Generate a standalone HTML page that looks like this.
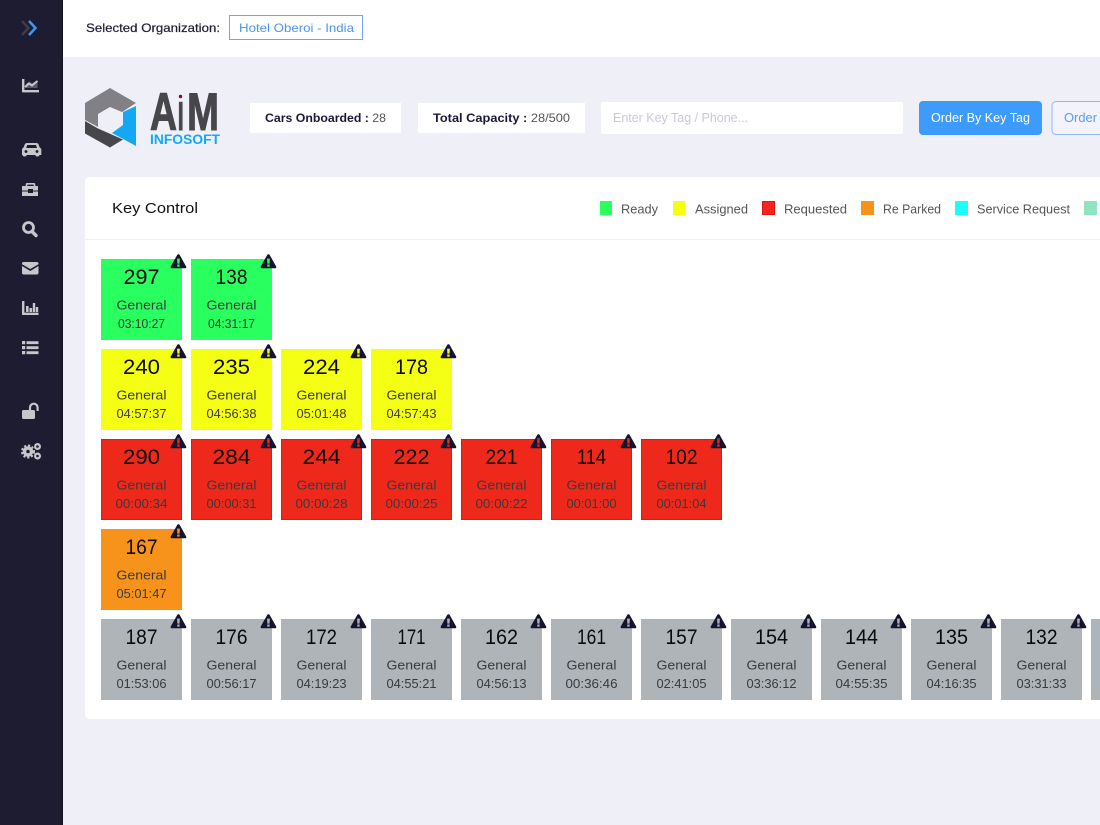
<!DOCTYPE html>
<html><head><meta charset="utf-8"><title>Key Control</title>
<style>
html,body{margin:0;padding:0;width:1100px;height:825px;overflow:hidden;background:#efeff8}
svg{display:block;font-family:"Liberation Sans",sans-serif}
.n{font-size:21px;fill:#0a0a0a;text-anchor:middle}
.g,.t{font-size:13px;fill:#3a3a3a;text-anchor:middle}
.l{font-size:12.5px;fill:#555}
.ic{fill:#c6c6cc}
</style></head><body>
<svg width="1100" height="825" viewBox="0 0 1100 825" xmlns="http://www.w3.org/2000/svg">
<defs>
<symbol id="w" viewBox="0 0 18 16" width="16.5" height="14.7"><path fill="#15132e" fill-rule="evenodd" d="M9 .3c.6 0 1.100.3 1.400.8l7 12.500c.5.9 0 1.900-1.100 1.900H1.700C.6 15.500.1 14.500.6 13.600l7-12.500C7.900.6 8.400.3 9 .3zM7.500 5.200l.3 5.300h2.400l.3-5.300zM7.700 11.400v2.300h2.600v-2.300z"/></symbol>
</defs>
<rect width="1100" height="825" fill="#efeff8"/>
<rect x="63" width="1037" height="57" fill="#fff"/>
<rect width="62" height="825" fill="#1e1c31"/><rect x="62" width="1" height="825" fill="#12111f"/>

<!-- sidebar icons -->
<path d="M22 21l6.500 7-6.500 7" fill="none" stroke="#3e3e4a" stroke-width="2.400"/>
<path d="M29 21l6.500 7-6.500 7" fill="none" stroke="#3f95f2" stroke-width="2.600"/>
<path class="ic" d="M22 79h2.400v11h14.600v2.400H22z"/><path class="ic" d="M25.500 84.500l3.500-3 3 1.800 5.500-3v7.700h-12z" opacity=".35"/><path d="M25 87l4-3.500 3 2 5.500-4.500" fill="none" stroke="#c6c6cc" stroke-width="2"/>
<path class="ic" fill-rule="evenodd" d="M27 143h9.400c1 0 1.800.6 2.200 1.500l1.100 3c1 .4 1.600 1.200 1.600 2.200V155h-2v.5c0 1.300-3.800 1.300-3.800 0V155H26.500v.5c0 1.300-3.800 1.300-3.800 0V155H22v-5.300c0-1 .6-1.800 1.600-2.200l1.100-3c.4-.9 1.200-1.500 2.300-1.500zm.2 2l-1 3h10.800l-1-3zM26 150a1.500 1.500 0 1 0 .01 0zm11 0a1.500 1.500 0 1 0 .01 0z"/>
<path class="ic" fill-rule="evenodd" d="M27 183h7c.8 0 1.300.6 1.300 1.300V186H38v4.500h-5V189h-5v1.500h-6V186h3.700v-1.700c0-.7.5-1.300 1.300-1.300zm.3 1.600V186h6.400v-1.400zM22 191.500h6v1.500h5v-1.500h5v4.500H22z"/>
<circle cx="28.500" cy="227.500" r="5" fill="none" stroke="#c6c6cc" stroke-width="2.800"/><path d="M32 231.500l4 4" stroke="#c6c6cc" stroke-width="3.400" stroke-linecap="round"/>
<path class="ic" d="M23.500 262h13.500c.8 0 1.500.7 1.500 1.500v.7l-8.200 4.800-8.300-4.800v-.7c0-.8.700-1.500 1.500-1.500zM22 266l8.300 5 8.200-5v7c0 .8-.7 1.500-1.500 1.500H23.500c-.8 0-1.500-.7-1.500-1.500z"/>
<path class="ic" d="M22 301h2.400v11.600H38.500v2.400H22zM26 306h2.600v6H26zM29.500 308h2.600v4h-2.600zM32.800 303h2.400v9h-2.400zM35.800 307h2.400v5h-2.400z"/>
<path class="ic" d="M22 341h3.200v3.200H22zM26.500 341.300H38.500v2.800H26.500zM22 346h3.200v3.200H22zM26.500 346.300H38.500v2.800H26.500zM22 351h3.200v3.200H22zM26.500 351.300H38.500v2.800H26.500z"/>
<rect class="ic" x="22" y="410" width="13" height="9" rx="1.500"/><path d="M30 410v-2.500a3.600 3.600 0 0 1 7.600 0V411" fill="none" stroke="#c6c6cc" stroke-width="2.200"/>
<circle cx="28" cy="451.500" r="3.500" fill="none" stroke="#c6c6cc" stroke-width="3.500"/><circle cx="28" cy="451.500" r="6" fill="none" stroke="#c6c6cc" stroke-width="2" stroke-dasharray="2.200 1.800"/>
<circle cx="37.500" cy="446.500" r="2.400" fill="none" stroke="#c6c6cc" stroke-width="2.200"/><circle cx="37.500" cy="456" r="2.400" fill="none" stroke="#c6c6cc" stroke-width="2.200"/>

<!-- top bar -->
<text x="86" y="32" font-size="12" fill="#1e1c31" textLength="134" lengthAdjust="spacingAndGlyphs" stroke="#1e1c31" stroke-width=".2">Selected Organization:</text>
<rect x="229.500" y="15.500" width="133" height="24" fill="#fff" stroke="#6da6f3"/>
<text x="239" y="32" font-size="12" fill="#4a94f0" textLength="115" lengthAdjust="spacingAndGlyphs">Hotel Oberoi - India</text>

<!-- logo -->
<path fill="#808085" d="M85 103l25-15 26 15-14 9-12-5-12 7v13l-13-7z"/>
<path fill="#47474b" d="M85 121l13 7.500 25 11-13 8-25-14z"/>
<path fill="#12a8f2" d="M136 106v40l-24-13 11-8v-13z"/>
<g font-size="53" font-weight="bold" fill="#47474b" stroke="#47474b" stroke-width="1.100">
<text x="150" y="130" textLength="27" lengthAdjust="spacingAndGlyphs">A</text>
<text x="177.500" y="130" textLength="6.500" lengthAdjust="spacingAndGlyphs">i</text>
<text x="187" y="130" textLength="32" lengthAdjust="spacingAndGlyphs">M</text>
</g>
<rect x="177" y="90" width="8" height="11.800" fill="#efeff8"/>
<circle cx="180.500" cy="96.500" r="1.700" fill="#7a1020"/>
<text x="150" y="144" font-size="14" font-weight="bold" fill="#14a9f2" textLength="70" lengthAdjust="spacingAndGlyphs">INFOSOFT</text>

<!-- toolbar -->
<rect x="250" y="103" width="151" height="30" fill="#fff"/>
<text x="265" y="122" font-size="12" fill="#555" textLength="121" lengthAdjust="spacingAndGlyphs"><tspan font-weight="bold" fill="#1a1838">Cars Onboarded :</tspan> 28</text>
<rect x="418" y="103" width="167" height="30" fill="#fff"/>
<text x="433" y="122" font-size="12" fill="#555" textLength="137" lengthAdjust="spacingAndGlyphs"><tspan font-weight="bold" fill="#1a1838">Total Capacity :</tspan> 28/500</text>
<rect x="601" y="102" width="302" height="32" rx="2" fill="#fff"/>
<text x="613" y="122" font-size="12.500" fill="#c9c8d8" textLength="135" lengthAdjust="spacingAndGlyphs">Enter Key Tag / Phone...</text>
<rect x="919" y="101" width="123" height="34" rx="4" fill="#3c9bfb"/>
<text x="931" y="122" font-size="12.500" fill="#fff" textLength="99" lengthAdjust="spacingAndGlyphs">Order By Key Tag</text>
<rect x="1052" y="101.500" width="70" height="33" rx="4" fill="#f3f3fb" stroke="#8fb8f5"/>
<text x="1064" y="122" font-size="12.500" fill="#5c9cf5" textLength="33" lengthAdjust="spacingAndGlyphs">Order</text>

<!-- card -->
<rect x="85" y="177" width="1040" height="542" rx="5" fill="#fff"/>
<rect x="85" y="239" width="1015" height="1" fill="#efeff4"/>
<text x="112" y="213" font-size="15" fill="#111" textLength="86" lengthAdjust="spacingAndGlyphs">Key Control</text>
<rect x="600" y="201" width="12" height="14" fill="#29ff5e"/><text class="l" x="621" y="213.500" textLength="37" lengthAdjust="spacingAndGlyphs">Ready</text>
<rect x="673" y="201" width="12" height="14" fill="#f5ff14"/><text class="l" x="695" y="213.500" textLength="53" lengthAdjust="spacingAndGlyphs">Assigned</text>
<rect x="762.500" y="201.500" width="12" height="13" fill="#f0281b" stroke="#e8101a"/><text class="l" x="784" y="213.500" textLength="63" lengthAdjust="spacingAndGlyphs">Requested</text>
<rect x="861" y="201" width="13" height="14" fill="#f7931a"/><text class="l" x="883" y="213.500" textLength="58" lengthAdjust="spacingAndGlyphs">Re Parked</text>
<rect x="955" y="201" width="13" height="14" fill="#1dfdfd"/><text class="l" x="977" y="213.500" textLength="93" lengthAdjust="spacingAndGlyphs">Service Request</text>
<rect x="1084" y="201" width="13" height="14" fill="#8fe3bf"/>

<!-- tiles -->
<g fill="#29ff5e"><rect x="101" y="259" width="81" height="81"/><rect x="191" y="259" width="81" height="81"/></g>
<g fill="#f5ff14"><rect x="101" y="349" width="81" height="81"/><rect x="191" y="349" width="81" height="81"/><rect x="281" y="349" width="81" height="81"/><rect x="371" y="349" width="81" height="81"/></g>
<g fill="#ee291b" stroke="#e6141c"><rect x="101.500" y="439.500" width="80" height="80"/><rect x="191.500" y="439.500" width="80" height="80"/><rect x="281.500" y="439.500" width="80" height="80"/><rect x="371.500" y="439.500" width="80" height="80"/><rect x="461.500" y="439.500" width="80" height="80"/><rect x="551.500" y="439.500" width="80" height="80"/><rect x="641.500" y="439.500" width="80" height="80"/></g>
<rect x="101" y="529" width="81" height="81" fill="#f7931a"/>
<g fill="#aeb4b7"><rect x="101" y="619" width="81" height="81"/><rect x="191" y="619" width="81" height="81"/><rect x="281" y="619" width="81" height="81"/><rect x="371" y="619" width="81" height="81"/><rect x="461" y="619" width="81" height="81"/><rect x="551" y="619" width="81" height="81"/><rect x="641" y="619" width="81" height="81"/><rect x="731" y="619" width="81" height="81"/><rect x="821" y="619" width="81" height="81"/><rect x="911" y="619" width="81" height="81"/><rect x="1001" y="619" width="81" height="81"/><rect x="1091" y="619" width="81" height="81"/></g>

<!-- warning icons -->
<g transform="translate(.2 0)">
<use href="#w" x="170" y="254"/><use href="#w" x="260" y="254"/>
<use href="#w" x="170" y="344"/><use href="#w" x="260" y="344"/><use href="#w" x="350" y="344"/><use href="#w" x="440" y="344"/>
<use href="#w" x="170" y="434"/><use href="#w" x="260" y="434"/><use href="#w" x="350" y="434"/><use href="#w" x="440" y="434"/><use href="#w" x="530" y="434"/><use href="#w" x="620" y="434"/><use href="#w" x="710" y="434"/>
<use href="#w" x="170" y="524"/>
<use href="#w" x="170" y="614"/><use href="#w" x="260" y="614"/><use href="#w" x="350" y="614"/><use href="#w" x="440" y="614"/><use href="#w" x="530" y="614"/><use href="#w" x="620" y="614"/><use href="#w" x="710" y="614"/><use href="#w" x="800" y="614"/><use href="#w" x="890" y="614"/><use href="#w" x="980" y="614"/><use href="#w" x="1070" y="614"/>
</g>

<!-- row 1 -->
<text class="n" x="141.500" y="284" textLength="36" lengthAdjust="spacingAndGlyphs">297</text><text class="g" x="141.500" y="309.500" textLength="50" lengthAdjust="spacingAndGlyphs">General</text><text class="t" x="141.500" y="328" textLength="47" lengthAdjust="spacingAndGlyphs">03:10:27</text>
<text class="n" x="231.500" y="284" textLength="32" lengthAdjust="spacingAndGlyphs">138</text><text class="g" x="231.500" y="309.500" textLength="50" lengthAdjust="spacingAndGlyphs">General</text><text class="t" x="231.500" y="328" textLength="47" lengthAdjust="spacingAndGlyphs">04:31:17</text>
<!-- row 2 -->
<text class="n" x="141.500" y="374" textLength="37" lengthAdjust="spacingAndGlyphs">240</text><text class="g" x="141.500" y="399.500" textLength="50" lengthAdjust="spacingAndGlyphs">General</text><text class="t" x="141.500" y="418" textLength="50" lengthAdjust="spacingAndGlyphs">04:57:37</text>
<text class="n" x="231.500" y="374" textLength="37" lengthAdjust="spacingAndGlyphs">235</text><text class="g" x="231.500" y="399.500" textLength="50" lengthAdjust="spacingAndGlyphs">General</text><text class="t" x="231.500" y="418" textLength="50" lengthAdjust="spacingAndGlyphs">04:56:38</text>
<text class="n" x="321.500" y="374" textLength="37" lengthAdjust="spacingAndGlyphs">224</text><text class="g" x="321.500" y="399.500" textLength="50" lengthAdjust="spacingAndGlyphs">General</text><text class="t" x="321.500" y="418" textLength="50" lengthAdjust="spacingAndGlyphs">05:01:48</text>
<text class="n" x="411.500" y="374" textLength="33" lengthAdjust="spacingAndGlyphs">178</text><text class="g" x="411.500" y="399.500" textLength="50" lengthAdjust="spacingAndGlyphs">General</text><text class="t" x="411.500" y="418" textLength="50" lengthAdjust="spacingAndGlyphs">04:57:43</text>
<!-- row 3 -->
<text class="n" x="141.500" y="464" textLength="37" lengthAdjust="spacingAndGlyphs">290</text><text class="g" x="141.500" y="489.500" textLength="50" lengthAdjust="spacingAndGlyphs">General</text><text class="t" x="141.500" y="508" textLength="52" lengthAdjust="spacingAndGlyphs">00:00:34</text>
<text class="n" x="231.500" y="464" textLength="38" lengthAdjust="spacingAndGlyphs">284</text><text class="g" x="231.500" y="489.500" textLength="50" lengthAdjust="spacingAndGlyphs">General</text><text class="t" x="231.500" y="508" textLength="50" lengthAdjust="spacingAndGlyphs">00:00:31</text>
<text class="n" x="321.500" y="464" textLength="38" lengthAdjust="spacingAndGlyphs">244</text><text class="g" x="321.500" y="489.500" textLength="50" lengthAdjust="spacingAndGlyphs">General</text><text class="t" x="321.500" y="508" textLength="52" lengthAdjust="spacingAndGlyphs">00:00:28</text>
<text class="n" x="411.500" y="464" textLength="36" lengthAdjust="spacingAndGlyphs">222</text><text class="g" x="411.500" y="489.500" textLength="50" lengthAdjust="spacingAndGlyphs">General</text><text class="t" x="411.500" y="508" textLength="52" lengthAdjust="spacingAndGlyphs">00:00:25</text>
<text class="n" x="501.500" y="464" textLength="32" lengthAdjust="spacingAndGlyphs">221</text><text class="g" x="501.500" y="489.500" textLength="50" lengthAdjust="spacingAndGlyphs">General</text><text class="t" x="501.500" y="508" textLength="52" lengthAdjust="spacingAndGlyphs">00:00:22</text>
<text class="n" x="591.500" y="464" textLength="29" lengthAdjust="spacingAndGlyphs">114</text><text class="g" x="591.500" y="489.500" textLength="50" lengthAdjust="spacingAndGlyphs">General</text><text class="t" x="591.500" y="508" textLength="50" lengthAdjust="spacingAndGlyphs">00:01:00</text>
<text class="n" x="681.500" y="464" textLength="32" lengthAdjust="spacingAndGlyphs">102</text><text class="g" x="681.500" y="489.500" textLength="50" lengthAdjust="spacingAndGlyphs">General</text><text class="t" x="681.500" y="508" textLength="50" lengthAdjust="spacingAndGlyphs">00:01:04</text>
<!-- row 4 -->
<text class="n" x="141.500" y="554" textLength="32" lengthAdjust="spacingAndGlyphs">167</text><text class="g" x="141.500" y="579.500" textLength="50" lengthAdjust="spacingAndGlyphs">General</text><text class="t" x="141.500" y="598" textLength="50" lengthAdjust="spacingAndGlyphs">05:01:47</text>
<!-- row 5 -->
<text class="n" x="141.500" y="644" textLength="32" lengthAdjust="spacingAndGlyphs">187</text><text class="g" x="141.500" y="669.500" textLength="50" lengthAdjust="spacingAndGlyphs">General</text><text class="t" x="141.500" y="688" textLength="50" lengthAdjust="spacingAndGlyphs">01:53:06</text>
<text class="n" x="231.500" y="644" textLength="32" lengthAdjust="spacingAndGlyphs">176</text><text class="g" x="231.500" y="669.500" textLength="50" lengthAdjust="spacingAndGlyphs">General</text><text class="t" x="231.500" y="688" textLength="50" lengthAdjust="spacingAndGlyphs">00:56:17</text>
<text class="n" x="321.500" y="644" textLength="31" lengthAdjust="spacingAndGlyphs">172</text><text class="g" x="321.500" y="669.500" textLength="50" lengthAdjust="spacingAndGlyphs">General</text><text class="t" x="321.500" y="688" textLength="50" lengthAdjust="spacingAndGlyphs">04:19:23</text>
<text class="n" x="411.500" y="644" textLength="28" lengthAdjust="spacingAndGlyphs">171</text><text class="g" x="411.500" y="669.500" textLength="50" lengthAdjust="spacingAndGlyphs">General</text><text class="t" x="411.500" y="688" textLength="50" lengthAdjust="spacingAndGlyphs">04:55:21</text>
<text class="n" x="501.500" y="644" textLength="33" lengthAdjust="spacingAndGlyphs">162</text><text class="g" x="501.500" y="669.500" textLength="50" lengthAdjust="spacingAndGlyphs">General</text><text class="t" x="501.500" y="688" textLength="50" lengthAdjust="spacingAndGlyphs">04:56:13</text>
<text class="n" x="591.500" y="644" textLength="29" lengthAdjust="spacingAndGlyphs">161</text><text class="g" x="591.500" y="669.500" textLength="50" lengthAdjust="spacingAndGlyphs">General</text><text class="t" x="591.500" y="688" textLength="52" lengthAdjust="spacingAndGlyphs">00:36:46</text>
<text class="n" x="681.500" y="644" textLength="32" lengthAdjust="spacingAndGlyphs">157</text><text class="g" x="681.500" y="669.500" textLength="50" lengthAdjust="spacingAndGlyphs">General</text><text class="t" x="681.500" y="688" textLength="50" lengthAdjust="spacingAndGlyphs">02:41:05</text>
<text class="n" x="771.500" y="644" textLength="33" lengthAdjust="spacingAndGlyphs">154</text><text class="g" x="771.500" y="669.500" textLength="50" lengthAdjust="spacingAndGlyphs">General</text><text class="t" x="771.500" y="688" textLength="50" lengthAdjust="spacingAndGlyphs">03:36:12</text>
<text class="n" x="861.500" y="644" textLength="33" lengthAdjust="spacingAndGlyphs">144</text><text class="g" x="861.500" y="669.500" textLength="50" lengthAdjust="spacingAndGlyphs">General</text><text class="t" x="861.500" y="688" textLength="52" lengthAdjust="spacingAndGlyphs">04:55:35</text>
<text class="n" x="951.500" y="644" textLength="33" lengthAdjust="spacingAndGlyphs">135</text><text class="g" x="951.500" y="669.500" textLength="50" lengthAdjust="spacingAndGlyphs">General</text><text class="t" x="951.500" y="688" textLength="50" lengthAdjust="spacingAndGlyphs">04:16:35</text>
<text class="n" x="1041.500" y="644" textLength="32" lengthAdjust="spacingAndGlyphs">132</text><text class="g" x="1041.500" y="669.500" textLength="50" lengthAdjust="spacingAndGlyphs">General</text><text class="t" x="1041.500" y="688" textLength="50" lengthAdjust="spacingAndGlyphs">03:31:33</text>
</svg>
</body></html>
